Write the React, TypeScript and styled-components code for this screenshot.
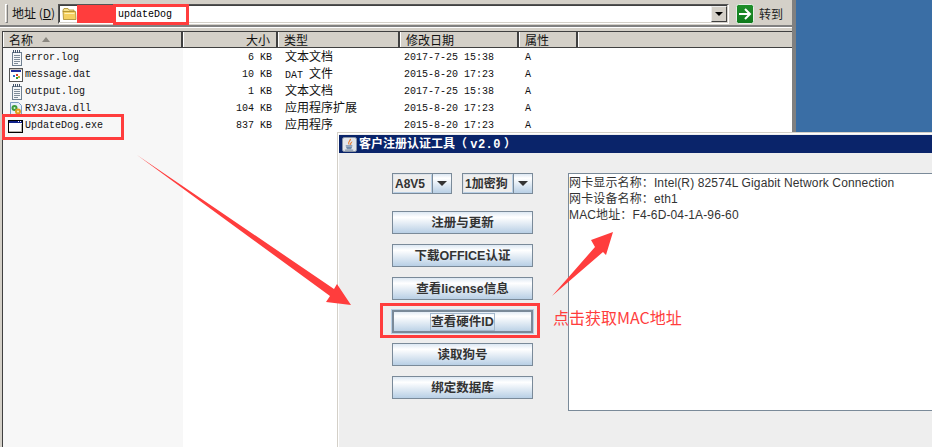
import React from "react";
import styled, { createGlobalStyle } from "styled-components";

const Global = createGlobalStyle`
  html, body { margin: 0; padding: 0; background: #fff; overflow: hidden; }
  * { box-sizing: border-box; }
`;

const CJK = `"Noto Sans CJK SC", sans-serif`;
const MONO = `"Liberation Mono", "Noto Sans CJK SC", monospace`;
const DIALOG = `"Liberation Sans", "Noto Sans CJK SC", sans-serif`;
const COLS = "180px 95px 122px 119px 59px 1fr";
const RED = "#ff3d3d";

const Desktop = styled.div`
  position: relative;
  width: 932px;
  height: 447px;
  overflow: hidden;
  background: #3a6ea5;
`;

/* Explorer window */
const Explorer = styled.div`
  position: absolute;
  left: 0;
  top: 0;
  width: 796px;
  height: 447px;
  display: flex;
  flex-direction: column;
  background: #d4d0c8;
  border-right: 4px solid;
  border-image: linear-gradient(90deg, #fff 0 25%, #d4d0c8 25% 50%, #808080 50% 100%) 1;
`;

const AddressBar = styled.div`
  height: 27px;
  flex: none;
  display: flex;
  align-items: flex-start;
  padding: 4px 0 0 5px;
  border-bottom: 2px solid #808080;
  box-shadow: 0 1px 0 #fff;
`;

const Gripper = styled.div`
  width: 3px;
  height: 19px;
  background: #d4d0c8;
  border: 1px solid;
  border-color: #fff #808080 #808080 #fff;
`;

const AddressLabel = styled.div`
  margin: 2px 0 0 4px;
  width: 46px;
  font: 12px/14px ${CJK};
  color: #111;
  white-space: nowrap;
  u { text-decoration: underline; }
`;

const AddressField = styled.div`
  width: 671px;
  height: 20px;
  display: flex;
  align-items: center;
  background: #fff;
  border: 1px solid;
  border-color: #555 #fff #fff #555;
  box-shadow: inset -1px -1px 0 #d4d0c8, inset 1px 1px 0 #404040;
  padding-left: 3px;
`;

const Masked = styled.div`
  width: 36px;
  height: 18px;
  background: ${RED};
  flex: none;
`;

const AddressText = styled.div`
  margin: 2px 0 0 5px;
  font: 10px/14px ${MONO};
  color: #000;
  flex: 1;
`;

const DropButton = styled.div`
  width: 16px;
  height: 16px;
  margin-right: 1px;
  display: flex;
  align-items: center;
  justify-content: center;
  background: #d4d0c8;
  border: 1px solid;
  border-color: #eee #404040 #404040 #eee;
  &::after {
    content: "";
    border: 4px solid transparent;
    border-top: 4px solid #000;
    border-bottom: 0;
  }
`;

const GoButton = styled.div`
  margin-left: 7px;
  display: flex;
  align-items: center;
  gap: 5px;
  font: 12px/14px ${CJK};
  color: #222;
`;

const ListPanel = styled.div`
  flex: 1;
  margin: 4px 0 0 2px;
  display: flex;
  flex-direction: column;
  border-top: 1px solid #404040;
  border-left: 1px solid #404040;
  background: #fff;
`;

const HeaderRow = styled.div`
  height: 16px;
  flex: none;
  display: grid;
  grid-template-columns: ${COLS};
  background: #d4d0c8;
  border-bottom: 1px solid #404040;
`;

const HeaderCell = styled.div<{ $end?: boolean }>`
  display: flex;
  align-items: center;
  justify-content: ${(p) => (p.$end ? "flex-end" : "flex-start")};
  padding: 0 ${(p) => (p.$end ? "6px" : "0")} 0 5px;
  font: 12px/14px ${CJK};
  color: #111;
  border-right: 2px solid #404040;
  border-left: 1px solid #fff;
  &:last-child { border-right: 0; }
`;

const SortMark = styled.span`
  margin-left: 9px;
  border: 4px solid transparent;
  border-bottom: 5px solid #8a8780;
  border-top: 0;
`;

const FileList = styled.div`
  flex: 1;
  padding-top: 1px;
  background: linear-gradient(90deg, #f7f7f7 0 180px, #fff 180px);
`;

const FileRow = styled.div`
  height: 17px;
  display: grid;
  grid-template-columns: ${COLS};
  align-items: center;
  font: 10px/14px ${MONO};
  color: #111;
  white-space: nowrap;
`;

const NameCell = styled.div`
  display: flex;
  align-items: center;
  padding-left: 5px;
  gap: 1px;
`;

const SizeCell = styled.div`
  text-align: right;
  padding-right: 6px;
`;

const TextCell = styled.div`
  padding-left: 7px;
  font-size: 10px;
`;

const DateCell = styled.div`
  padding-left: 4px;
`;

const AttrCell = styled.div`
  padding-left: 6px;
`;

const Cjk = styled.span`
  font: 12px/14px ${CJK};
`;

/* Java application window */
const AppWindow = styled.div`
  position: absolute;
  left: 337px;
  top: 132px;
  width: 600px;
  height: 320px;
  display: flex;
  flex-direction: column;
  background: #eeeeee;
  border-top: 1px solid #d4d0c8;
  border-left: 1px solid #d4d0c8;
  box-shadow: inset 1px 1px 0 #fff;
  padding: 2px 0 0 1px;
`;

const TitleBar = styled.div`
  height: 18px;
  flex: none;
  display: flex;
  align-items: center;
  gap: 2px;
  padding-left: 3px;
  background: #0a246a;
  color: #fff;
  font: bold 12px/16px ${DIALOG};
  white-space: nowrap;
`;

const TitleText = styled.span`
  span { font-family: "Liberation Mono", monospace; letter-spacing: 0.4px; }
`;

const AppBody = styled.div`
  flex: 1;
  display: flex;
  align-items: flex-start;
  padding: 20px 0 0 53px;
  gap: 35px;
`;

const Controls = styled.div`
  width: 141px;
  flex: none;
  display: flex;
  flex-direction: column;
  gap: 10px;
`;

const ComboRow = styled.div`
  display: flex;
  justify-content: space-between;
  margin-bottom: 7px;
`;

const Combo = styled.div<{ $w: number }>`
  width: ${(p) => p.$w}px;
  height: 21px;
  display: flex;
  border: 1px solid #7a8a99;
  background: #eee;
`;

const ComboValue = styled.div`
  flex: 1;
  font: bold 12px/18px ${DIALOG};
  color: #333;
  padding-left: 1px;
  border: 1px solid;
  border-color: #dfe4ea #b8cfe5 #b8cfe5 #dfe4ea;
  white-space: nowrap;
`;

const ComboArrow = styled.div`
  width: 19px;
  flex: none;
  display: flex;
  align-items: center;
  justify-content: center;
  border-left: 1px solid #7a8a99;
  background: linear-gradient(180deg, #dde8f3 0%, #fff 22%, #b8cfe5 100%);
  &::after {
    content: "";
    border: 5px solid transparent;
    border-top: 5px solid #333;
    border-bottom: 0;
  }
`;

const ActionButton = styled.div<{ $focused?: boolean }>`
  height: 23px;
  display: flex;
  align-items: center;
  justify-content: center;
  border: 1px solid #7a8a99;
  background: linear-gradient(180deg, #dde8f3 0%, #fff 25%, #b8cfe5 100%);
  font: bold 12.5px/16px ${DIALOG};
  color: #333;
  white-space: nowrap;
  ${(p) => p.$focused && "box-shadow: inset 0 0 0 1px #7a8a99; outline: 1px solid #b8cfe5;"}
`;

const FocusText = styled.span`
  border: 1px solid #a3b8cc;
  padding: 0;
`;

const Output = styled.div`
  width: 380px;
  height: 238px;
  flex: none;
  padding: 1px 0 0 0;
  background: #fff;
  border: 1px solid #7a8a99;
  font: 12px/16px ${DIALOG};
  letter-spacing: 0.13px;
  color: #333;
  white-space: nowrap;
`;

/* Red annotations that lie over the screenshot */
const Mark = styled.div<{ $x: number; $y: number; $w: number; $h: number }>`
  position: absolute;
  left: ${(p) => p.$x}px;
  top: ${(p) => p.$y}px;
  width: ${(p) => p.$w}px;
  height: ${(p) => p.$h}px;
  border: 3px solid ${RED};
`;

const Note = styled.div`
  position: absolute;
  left: 553px;
  top: 306px;
  font: 16px/22px ${CJK};
  color: ${RED};
  white-space: nowrap;
`;

const Overlay = styled.svg`
  position: absolute;
  left: 0;
  top: 0;
  pointer-events: none;
`;

const Notepad = () => (
  <svg width="16" height="16" viewBox="0 0 16 16" shapeRendering="crispEdges">
    <path d="M4.500 2.500h9v13h-9z" fill="#f4f6f8" stroke="#6f7f8f" />
    <path d="M5 0h1v3H5zM7 0h1v3H7zM9 0h1v3H9zM11 0h1v3h-1z" fill="#44556b" />
    <path d="M6 5h6v1H6zM6 7h6v1H6zM6 9h6v1H6zM6 11h6v1H6zM6 13h4v1H6z" fill="#7f8c99" />
  </svg>
);

const DatIcon = () => (
  <svg width="16" height="16" viewBox="0 0 16 16" shapeRendering="crispEdges">
    <path d="M1.500 1.500h13v13h-13z" fill="#fff" stroke="#555" />
    <path d="M2 2h12v1H2z" fill="#c8c4bc" />
    <path d="M3 3h10v2H3z" fill="#1f2f9f" />
    <path d="M5 8h2v2H5z" fill="#2a70c8" />
    <path d="M8 7h2v2H8z" fill="#d8402a" />
    <path d="M8 10h2v2H8z" fill="#2e9b3a" />
    <path d="M10 9h2v2h-2z" fill="#c8b030" />
  </svg>
);

const DllIcon = () => (
  <svg width="16" height="16" viewBox="0 0 16 16">
    <path d="M2.500 1.500h8l3 3v10h-11z" fill="#e8f0fa" stroke="#7b9cc4" />
    <circle cx="6.500" cy="7" r="3" fill="#3c9a3c" />
    <circle cx="10" cy="10.500" r="3" fill="#e0a020" />
    <circle cx="6.500" cy="7" r="1" fill="#d8f0d8" />
    <circle cx="10" cy="10.500" r="1" fill="#fff0c8" />
  </svg>
);

const ExeIcon = () => (
  <svg width="16" height="16" viewBox="0 0 16 16" shapeRendering="crispEdges">
    <path d="M0 2h15v13H0z" fill="#000" />
    <path d="M1 3h13v11H1z" fill="#fff" />
    <path d="M1 3h13v2H1z" fill="#10218b" />
    <path d="M10 3h1v1h-1zM12 3h1v1h-1z" fill="#fff" />
    <path d="M14 14H1v-1h12V6h1z" fill="#b8b4ac" />
  </svg>
);

const Folder = () => (
  <svg width="15" height="14" viewBox="0 0 15 14">
    <path d="M1 3 L2 1.500 H6 L7 3 H12 V5 H1 Z" fill="#f6e08a" stroke="#a88a2a" strokeWidth="0.8" />
    <path d="M1 4.500 H13.500 L14 12.500 H1.500 Z" fill="#f4d060" stroke="#a88a2a" strokeWidth="0.8" />
    <path d="M2.500 6 H12.500 V7 H2.500 Z" fill="#fff2b8" />
  </svg>
);

const GoIcon = () => (
  <svg width="18" height="20" viewBox="0 0 18 20">
    <defs>
      <linearGradient id="go" x1="0" y1="0" x2="0" y2="1">
        <stop offset="0" stopColor="#1f8f2a" />
        <stop offset="1" stopColor="#0f7a1c" />
      </linearGradient>
    </defs>
    <rect x="0.500" y="0.500" width="17" height="19" rx="2" fill="url(#go)" stroke="#e8efe8" />
    <path d="M3 10h10M9 5l5 5-5 5" fill="none" stroke="#fff" strokeWidth="2" />
  </svg>
);

const JavaIcon = () => (
  <svg width="15" height="15" viewBox="0 0 16 16">
    <rect x="0.500" y="0.500" width="15" height="15" rx="2" fill="#e4e6ea" stroke="#8a94a4" />
    <path d="M9 2c1 2-3 3-1.500 6C6 6.500 8 4 9 2z M10.500 5c0 1.500-2 2-1 3.500C8 7.500 9.500 6 10.500 5z" fill="#e8701a" stroke="#e8701a" strokeWidth="0.6" />
    <path d="M4 9.500h7M4.500 11h6M5 12.500h5" stroke="#4c6f96" strokeWidth="1" fill="none" />
    <path d="M3 14h9" stroke="#6b7f98" strokeWidth="1" />
  </svg>
);

type FileData = {
  icon: React.ReactNode;
  name: string;
  size: string;
  typePrefix?: string;
  type: string;
  date: string;
};

const files: FileData[] = [
  { icon: <Notepad />, name: "error.log", size: "6 KB", type: "文本文档", date: "2017-7-25 15:38" },
  { icon: <DatIcon />, name: "message.dat", size: "10 KB", typePrefix: "DAT ", type: "文件", date: "2015-8-20 17:23" },
  { icon: <Notepad />, name: "output.log", size: "1 KB", type: "文本文档", date: "2017-7-25 15:38" },
  { icon: <DllIcon />, name: "RY3Java.dll", size: "104 KB", type: "应用程序扩展", date: "2015-8-20 17:23" },
  { icon: <ExeIcon />, name: "UpdateDog.exe", size: "837 KB", type: "应用程序", date: "2015-8-20 17:23" },
];

const actions = ["注册与更新", "下载OFFICE认证", "查看license信息", "查看硬件ID", "读取狗号", "绑定数据库"];

export default function App() {
  return (
    <Desktop>
      <Global />
      <Explorer>
        <AddressBar>
          <Gripper />
          <AddressLabel>地址 (<u>D</u>)</AddressLabel>
          <AddressField>
            <Folder />
            <Masked />
            <AddressText>updateDog</AddressText>
            <DropButton />
          </AddressField>
          <GoButton>
            <GoIcon />
            转到
          </GoButton>
        </AddressBar>
        <ListPanel>
          <HeaderRow>
            <HeaderCell>名称<SortMark /></HeaderCell>
            <HeaderCell $end>大小</HeaderCell>
            <HeaderCell>类型</HeaderCell>
            <HeaderCell>修改日期</HeaderCell>
            <HeaderCell>属性</HeaderCell>
            <HeaderCell />
          </HeaderRow>
          <FileList>
            {files.map((f) => (
              <FileRow key={f.name}>
                <NameCell>{f.icon}{f.name}</NameCell>
                <SizeCell>{f.size}</SizeCell>
                <TextCell>{f.typePrefix}<Cjk>{f.type}</Cjk></TextCell>
                <DateCell>{f.date}</DateCell>
                <AttrCell>A</AttrCell>
              </FileRow>
            ))}
          </FileList>
        </ListPanel>
      </Explorer>

      <AppWindow>
        <TitleBar>
          <JavaIcon />
          <TitleText>客户注册认证工具（ <span>v2.0</span> ）</TitleText>
        </TitleBar>
        <AppBody>
          <Controls>
            <ComboRow>
              <Combo $w={60}>
                <ComboValue>A8V5</ComboValue>
                <ComboArrow />
              </Combo>
              <Combo $w={71}>
                <ComboValue>1加密狗</ComboValue>
                <ComboArrow />
              </Combo>
            </ComboRow>
            {actions.map((a) => (
              <ActionButton key={a} $focused={a === "查看硬件ID"}>
                {a === "查看硬件ID" ? <FocusText>{a}</FocusText> : a}
              </ActionButton>
            ))}
          </Controls>
          <Output>
            <div>网卡显示名称：Intel(R) 82574L Gigabit Network Connection</div>
            <div>网卡设备名称：eth1</div>
            <div>MAC地址：F4-6D-04-1A-96-60</div>
          </Output>
        </AppBody>
      </AppWindow>

      <Mark $x={113} $y={4} $w={76} $h={21} />
      <Mark $x={2} $y={114} $w={122} $h={26} />
      <Mark $x={380} $y={303} $w={160} $h={35} />
      <Note>点击获取MAC地址</Note>
      <Overlay width="932" height="447" viewBox="0 0 932 447">
        <polygon points="137,155 334,289 337,284 351,305 326,302 330,296" fill={RED} />
        <polygon points="552,296 595,247 591,240 613,232 606,255 603,252" fill={RED} />
      </Overlay>
    </Desktop>
  );
}
